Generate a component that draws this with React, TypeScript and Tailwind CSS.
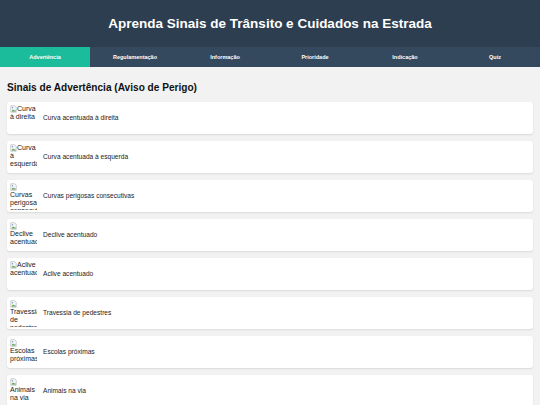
const tabs = ['Advertência', 'Regulamentação', 'Informação', 'Prioridade', 'Indicação', 'Quiz']

const signs = [
  { alt: 'Curva à direita', name: 'Curva acentuada à direita' },
  { alt: 'Curva à esquerda', name: 'Curva acentuada à esquerda' },
  { alt: 'Curvas perigosas consecutivas', name: 'Curvas perigosas consecutivas' },
  { alt: 'Declive acentuado', name: 'Declive acentuado' },
  { alt: 'Aclive acentuado', name: 'Aclive acentuado' },
  { alt: 'Travessia de pedestres', name: 'Travessia de pedestres' },
  { alt: 'Escolas próximas', name: 'Escolas próximas' },
  { alt: 'Animais na via', name: 'Animais na via' },
]

// mimics the browser's broken-image placeholder with alt text
function BrokenImage({ alt }: { alt: string }) {
  return (
    <div className="w-[27px] h-[27px] overflow-hidden flex-shrink-0 text-[7px] leading-[8px] text-[#222]">
      <svg width="7" height="8" viewBox="0 0 14 16" className="inline-block align-bottom">
        <path d="M1.5 1.5h8l3 3v10h-11z" fill="#f6f6f6" stroke="#a0a0a0" strokeWidth="1" />
        <path d="M3 13l3-4 2.5 2.5 1.5-1.5 2 3z" fill="#4f9a4f" />
        <circle cx="5" cy="5.5" r="1.3" fill="#6b9bd1" />
      </svg>
      {alt}
    </div>
  )
}

export default function App() {
  return (
    <div className="min-h-[405px] bg-[#f2f2f2]" style={{ fontFamily: '"Liberation Sans", Arial, sans-serif' }}>
      {/* Header */}
      <header className="h-[47px] bg-[#2c3e50] flex items-center justify-center pt-[1px]">
        <h1 className="text-white font-bold text-[13.5px]">Aprenda Sinais de Trânsito e Cuidados na Estrada</h1>
      </header>

      {/* Tabs */}
      <nav className="h-[20px] bg-[#34495e] grid grid-cols-6">
        {tabs.map((tab, i) => (
          <div
            key={tab}
            className={`flex items-center justify-center text-white font-bold text-[5.5px] ${i === 0 ? 'bg-[#1abc9c]' : ''}`}
          >
            {tab}
          </div>
        ))}
      </nav>

      <main className="px-[7px] pt-[14px]">
        <h2 className="text-[#111] font-bold text-[10.1px] leading-[14px] mb-[7px]">Sinais de Advertência (Aviso de Perigo)</h2>
        <div className="flex flex-col gap-[7px]">
          {signs.map((s) => (
            <div key={s.name} className="h-[32px] bg-white rounded-[3px] shadow-[0_1px_2px_rgba(0,0,0,0.1)] px-[3px] flex items-center gap-[6px]">
              <BrokenImage alt={s.alt} />
              <span className="text-[6.6px] text-[#222]">{s.name}</span>
            </div>
          ))}
        </div>
      </main>
    </div>
  )
}
